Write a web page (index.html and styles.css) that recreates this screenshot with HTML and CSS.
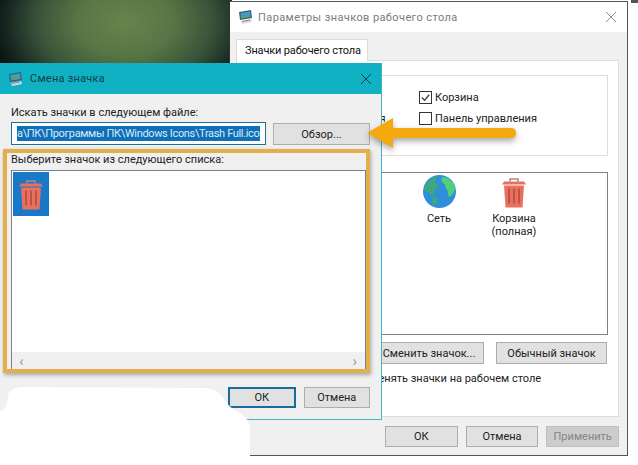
FILE: index.html
```html
<!DOCTYPE html>
<html lang="ru">
<head>
<meta charset="utf-8">
<title>Смена значка</title>
<link rel="stylesheet" href="styles.css">
</head>
<body>
<svg class="defs" width="0" height="0" aria-hidden="true">
  <defs>
    <symbol id="trash" viewBox="0 0 26 30">
      <path d="M9 4V1.5h8V4" fill="none" stroke="#a98a86" stroke-width="1.6"/>
      <path d="M1 7l2-3h20l2 3z" fill="#e8705f"/>
      <path d="M3 8h20l-1.500 22h-17z" fill="#e8705f"/>
      <path d="M8 11v15M13 11v15M18 11v15" stroke="#bf5144" stroke-width="2"/>
    </symbol>
    <symbol id="monitor" viewBox="0 0 16 16">
      <path d="M1 3l12-2 1 8-12 2z" fill="#44597a"/>
      <path d="M2.500 4l9.500-1.600.7 5.300-9.500 1.600z" fill="#3f9ccf"/>
      <path d="M3 8l4-3 5 3-9 1.500z" fill="#4fa565"/>
      <path d="M3 12l10-2 1 3-10 2z" fill="#d6dbe2"/>
      <path d="M4 12.500l8-1.500" stroke="#7d8794"/>
    </symbol>
  </defs>
</svg>

<div class="desktop"></div>
<div class="corner"></div>

<section class="window back">
  <header class="back-title">
    <svg class="title-icon"><use href="#monitor"/></svg>
    <span class="back-title-text">Параметры значков рабочего стола</span>
    <svg class="close-icon light" viewBox="0 0 12 12"><path d="M1 1l10 10M11 1L1 11"/></svg>
  </header>
  <div class="back-body">
    <div class="tab">Значки рабочего стола</div>
    <div class="panel">
      <div class="group">
        <div class="check-col left-col">
          <label class="check"><span class="box"></span>Компьютер</label>
          <label class="check"><span class="box"></span>Файлы пользователя</label>
        </div>
        <div class="check-col">
          <label class="check"><span class="box on"><svg viewBox="0 0 12 12"><path d="M2 6l3 3 5-6"/></svg></span>Корзина</label>
          <label class="check"><span class="box"></span>Панель управления</label>
        </div>
      </div>
      <div class="icon-list">
        <figure class="desk-icon">
          <svg class="globe" viewBox="0 0 32 32">
            <circle cx="16" cy="16" r="16" fill="#2f8fd8"/>
            <path d="M13 1c-4 2-10 6-12 13 1 3 4 1 5 3s2 4 4 3 0-4 2-6 3-3 2-5-3-1-2-4 2-3 1-4z" fill="#3fa87a"/>
            <path d="M19 2c-2 3-1 5 1 6s1 4 3 6 1 6 2 7 5-3 6-8c0-5-6-11-12-11z" fill="#4fd07a"/>
            <path d="M11 21c2 0 3 2 3 4s-2 4-3 4-2-2-2-4 0-4 2-4z" fill="#3fa87a"/>
          </svg>
          <figcaption>Сеть</figcaption>
        </figure>
        <figure class="desk-icon">
          <svg class="trash-big"><use href="#trash"/></svg>
          <figcaption>Корзина<br>(полная)</figcaption>
        </figure>
      </div>
      <div class="list-actions">
        <button class="btn change">Сменить значок...</button>
        <button class="btn normal">Обычный значок</button>
      </div>
      <div class="theme-note">Разрешить темам изменять значки на рабочем столе</div>
    </div>
    <footer class="back-footer">
      <button class="btn foot">ОК</button>
      <button class="btn foot">Отмена</button>
      <button class="btn foot disabled">Применить</button>
    </footer>
  </div>
</section>

<section class="window front">
  <header class="front-title">
    <svg class="title-icon"><use href="#monitor"/></svg>
    <span class="front-title-text">Смена значка</span>
    <svg class="close-icon dark" viewBox="0 0 12 12"><path d="M1 1l10 10M11 1L1 11"/></svg>
  </header>
  <div class="front-body">
    <div class="field-label">Искать значки в следующем файле:</div>
    <div class="file-row">
      <div class="file-input"><span class="selected">а\ПК\Программы ПК\Windows Icons\Trash Full.ico</span></div>
      <button class="btn browse">Обзор...</button>
    </div>
    <div class="field-label second">Выберите значок из следующего списка:</div>
    <div class="picker">
      <div class="picker-items">
        <div class="picker-item"><svg class="trash-small"><use href="#trash"/></svg></div>
      </div>
      <div class="scrollbar"><span>&#8249;</span><span>&#8250;</span></div>
    </div>
    <div class="front-actions">
      <button class="btn ok">ОК</button>
      <button class="btn cancel">Отмена</button>
    </div>
  </div>
</section>

<svg class="blob" viewBox="0 0 252 80">
  <path d="M8 8Q10 0 25 0L205 1Q218 2 224 12Q228 20 240 26Q250 32 250 42L250 80L0 80L0 24Q8 22 8 8Z" fill="#fff"/>
</svg>
<div class="highlight"></div>
<svg class="arrow" viewBox="0 0 160 40">
  <path d="M0 16 L26 1 L26 11 L144 11 Q149 11 149 16 Q149 21 144 21 L26 21 L26 31 Z" fill="#f5a90f"/>
</svg>
</body>
</html>
```

FILE: styles.css
```css
* { box-sizing: border-box; }
html, body { margin: 0; padding: 0; }
body {
  position: relative;
  width: 638px;
  height: 465px;
  overflow: hidden;
  background: #fff;
  font-family: "Roboto", "Noto Sans", sans-serif;
  font-size: 11px;
  color: #222;
}
.defs { position: absolute; }
.desktop {
  position: absolute;
  left: 0;
  top: 0;
  width: 232px;
  height: 66px;
  background:
    radial-gradient(ellipse 135px 95px at 125px 22px, #66844c 0%, #587645 35%, #38533a 65%, #14231e 90%, #0a1411 100%),
    #0a1411;
}
.corner {
  position: absolute;
  right: 0;
  top: 0;
  width: 7px;
  height: 3px;
  background: #555;
}
.window { position: absolute; display: flex; flex-direction: column; }

/* back window */
.back {
  left: 229px;
  top: 1px;
  width: 399px;
  height: 455px;
  background: #f0f0f0;
  border: 1px solid #555;
  border-left-color: #333;
}
.back-title {
  display: flex;
  align-items: center;
  height: 30px;
  flex: none;
  padding: 0 8px 0 8px;
  background: #fff;
}
.title-icon { width: 16px; height: 16px; flex: none; }
.back-title-text {
  margin-left: 4px;
  color: #7b7b7b;
  letter-spacing: .4px;
}
.close-icon { width: 12px; height: 12px; margin-left: auto; fill: none; stroke-width: 1; }
.close-icon.light { stroke: #8a8a8a; margin-right: 2px; }
.close-icon.dark { stroke: #12414a; }
.back-body {
  flex: 1;
  display: flex;
  flex-direction: column;
  padding: 7px 8px 0 6px;
}
.tab {
  position: relative;
  z-index: 1;
  width: 132px;
  height: 23px;
  margin-bottom: -2px;
  padding: 4px 0 0 8px;
  background: #fff;
  border: 1px solid #dcdcdc;
  border-bottom: 0;
  color: #111;
  letter-spacing: -.15px;
  white-space: nowrap;
}
.panel {
  height: 357px;
  padding: 14px 10px 0 11px;
  background: #fff;
  border: 1px solid #dcdcdc;
}
.group {
  display: flex;
  gap: 26px;
  height: 81px;
  padding: 15px 0 0 10px;
  border: 1px solid #dddddd;
}
.check-col { display: flex; flex-direction: column; gap: 8px; }
.left-col { width: 134px; flex: none; white-space: nowrap; }
.check { display: flex; align-items: center; gap: 3px; height: 13px; white-space: nowrap; }
.box {
  width: 13px;
  height: 13px;
  flex: none;
  background: #fff;
  border: 1px solid #333;
}
.box svg { display: block; width: 11px; height: 11px; fill: none; stroke: #444; stroke-width: 1.500; }
.icon-list {
  display: flex;
  height: 163px;
  margin-top: 16px;
  padding: 2px 0 0 171px;
  gap: 37px;
  border: 1px solid #808080;
}
.desk-icon {
  display: flex;
  flex-direction: column;
  align-items: center;
  width: 38px;
  margin: 0;
  text-align: center;
  line-height: 13px;
  white-space: nowrap;
}
.desk-icon:last-child { width: 66px; margin-left: -14px; }
.globe { width: 33px; height: 33px; }
.trash-big { width: 26px; height: 31px; margin-top: 2px; }
.desk-icon figcaption { margin-top: 4px; }
.list-actions {
  display: flex;
  justify-content: flex-end;
  gap: 12px;
  margin-top: 7px;
}
.btn {
  padding: 0;
  font: inherit;
  color: #222;
  background: #e1e1e1;
  border: 1px solid #adadad;
  white-space: nowrap;
}
.change { width: 110px; height: 22px; }
.normal { width: 111px; height: 22px; margin-right: 1px; }
.theme-note { margin: 8px 0 0 15px; line-height: 14px; white-space: nowrap; }
.back-footer {
  display: flex;
  gap: 8px;
  margin-top: 9px;
  padding-left: 149px;
}
.foot { width: 73px; height: 21px; }
.disabled { background: #cccccc; border-color: #bfbfbf; color: #858585; }

/* blob over the lower left corner */
.blob {
  position: absolute;
  left: 0;
  top: 387px;
  width: 252px;
  height: 80px;
}

/* front window */
.front {
  left: 0;
  top: 63px;
  width: 382px;
  height: 357px;
  border: solid #3fb7c3;
  border-width: 0 1px 1px 0;
  background: transparent;
}
.front-title {
  display: flex;
  align-items: center;
  flex: none;
  height: 31px;
  padding: 0 9px 0 8px;
  background: #0fb1c3;
}
.front-title-text {
  margin-left: 6px;
  color: #103f4a;
  letter-spacing: .25px;
}
.front-body {
  flex: 1;
  display: flex;
  flex-direction: column;
  padding: 11px 11px 0 11px;
  background: #f0f0f0;
}
.field-label { height: 15px; line-height: 15px; white-space: nowrap; color: #222; }
.field-label.second { height: 14px; margin-top: 8px; line-height: 14px; }
.file-row { display: flex; gap: 7px; align-items: center; margin-top: 2px; }
.file-input {
  display: flex;
  align-items: center;
  width: 255px;
  height: 23px;
  padding: 0 5px;
  background: #fff;
  border: 1px solid #1c6f96;
}
.selected {
  display: block;
  width: 243px;
  line-height: 15px;
  background: #0f6fb8;
  color: #d9ecf7;
  letter-spacing: -.34px;
  white-space: nowrap;
}
.browse { width: 97px; height: 22px; margin-top: 1px; }
.picker {
  display: flex;
  flex-direction: column;
  width: 355px;
  height: 199px;
  margin-top: 3px;
  background: #fff;
  border: solid #808080;
  border-width: 1px 1px 0 1px;
}
.picker-items { flex: 1; padding: 1px 0 0 1px; }
.picker-item {
  display: flex;
  justify-content: center;
  width: 36px;
  height: 44px;
  padding-top: 7px;
  background: #1a78c8;
}
.trash-small { width: 26px; height: 31px; }
.scrollbar {
  display: flex;
  justify-content: space-between;
  align-items: center;
  height: 17px;
  padding: 0 8px 0 7px;
  background: #f0f0f0;
  color: #a6a6a6;
  font-size: 15px;
  font-weight: 700;
}
.front-actions {
  display: flex;
  gap: 8px;
  margin-top: 18px;
  padding-left: 217px;
}
.ok { width: 68px; height: 21px; border: 2px solid #1a6a9c; }
.cancel { width: 67px; height: 21px; }

/* annotations */
.highlight {
  position: absolute;
  left: 3px;
  top: 149px;
  width: 367px;
  height: 224px;
  border: 4px solid #e3ae4c;
  box-shadow: 1px 2px 4px rgba(0, 0, 0, .3);
}
.arrow {
  position: absolute;
  left: 367px;
  top: 117px;
  width: 160px;
  height: 40px;
  filter: drop-shadow(0 3px 3px rgba(0, 0, 0, .35));
}
```
